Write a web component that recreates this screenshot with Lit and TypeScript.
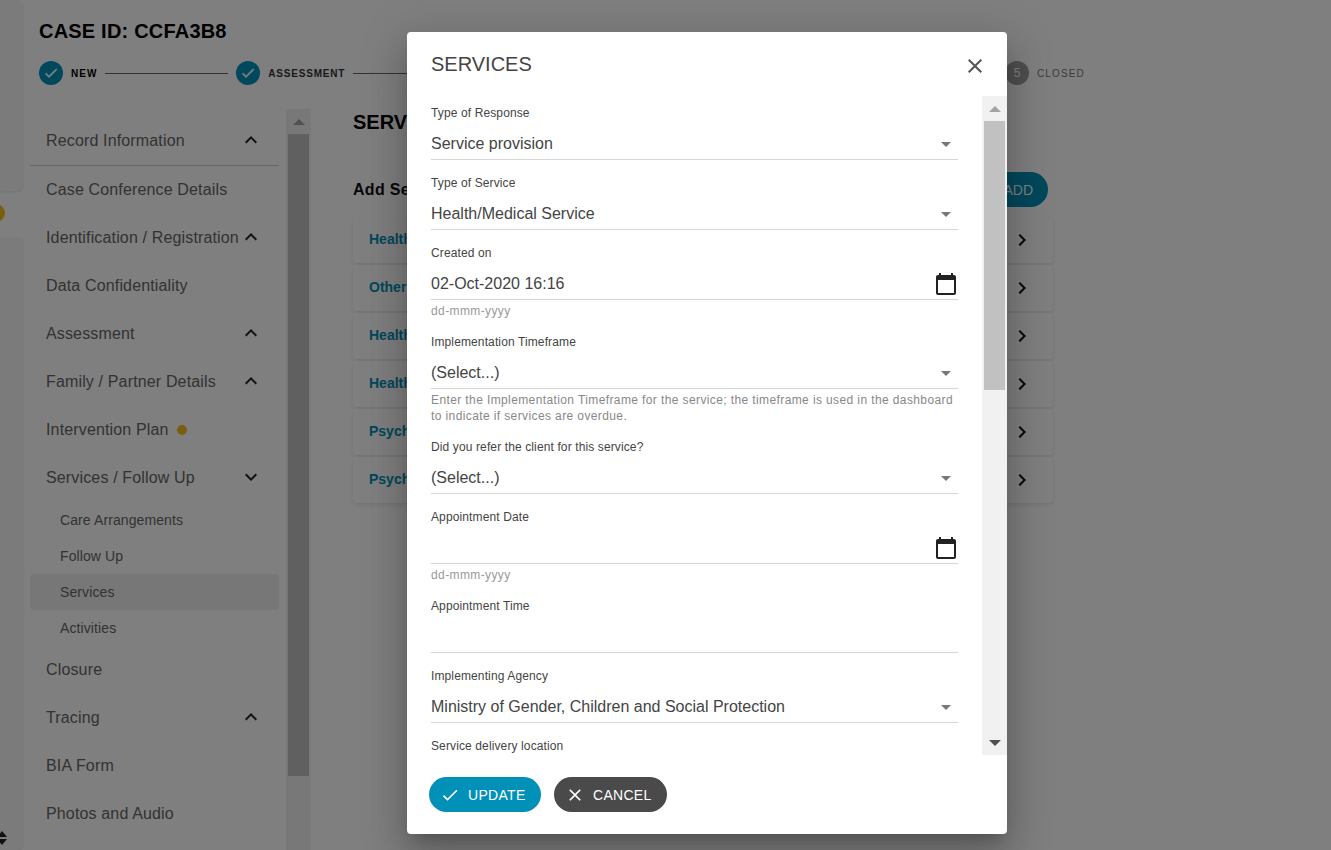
import { LitElement, css, html, svg } from "lit";
import { customElement } from "lit/decorators.js";

const ICONS = {
  check: "M9 16.17L4.83 12l-1.42 1.41L9 19 21 7l-1.41-1.41z",
  close:
    "M19 6.41L17.59 5 12 10.59 6.41 5 5 6.41 10.59 12 5 17.59 6.41 19 12 13.41 17.59 19 19 17.59 13.41 12z",
  up: "M7.41 15.41L12 10.83l4.59 4.58L18 14l-6-6-6 6z",
  down: "M7.41 8.59L12 13.17l4.59-4.58L18 10l-6 6-6-6z",
  right: "M10 6L8.59 7.41 13.17 12l-4.58 4.59L10 18l6-6z",
  calendar:
    "M20 3h-1V1h-2v2H7V1H5v2H4c-1.1 0-2 .9-2 2v16c0 1.1.9 2 2 2h16c1.1 0 2-.9 2-2V5c0-1.1-.9-2-2-2zm0 18H4V8h16v13z",
};

const icon = (name: keyof typeof ICONS, size = 24) => html`<svg
  class="icon"
  width=${size}
  height=${size}
  viewBox="0 0 24 24"
  fill="currentColor"
>
  ${svg`<path d=${ICONS[name]}></path>`}
</svg>`;

type NavItem = {
  label: string;
  chevron?: "up" | "down";
  dot?: boolean;
  divider?: boolean;
  sub?: { label: string; active?: boolean }[];
};

const NAV: NavItem[] = [
  { label: "Record Information", chevron: "up", divider: true },
  { label: "Case Conference Details" },
  { label: "Identification / Registration", chevron: "up" },
  { label: "Data Confidentiality" },
  { label: "Assessment", chevron: "up" },
  { label: "Family / Partner Details", chevron: "up" },
  { label: "Intervention Plan", dot: true },
  {
    label: "Services / Follow Up",
    chevron: "down",
    sub: [
      { label: "Care Arrangements" },
      { label: "Follow Up" },
      { label: "Services", active: true },
      { label: "Activities" },
    ],
  },
  { label: "Closure" },
  { label: "Tracing", chevron: "up" },
  { label: "BIA Form" },
  { label: "Photos and Audio" },
];

const STEPS = ["NEW", "ASSESSMENT", "PLANNING", "IMPLEMENTATION", "CLOSED"];
const SERVICES = [
  "Health/Medical Service",
  "Other Service",
  "Health/Medical Service",
  "Health/Medical Service",
  "Psychosocial Service",
  "Psychosocial Service",
];

type Field = {
  label: string;
  value?: string;
  kind?: "select" | "date" | "text";
  help?: string;
};

const FIELDS: Field[] = [
  { label: "Type of Response", value: "Service provision", kind: "select" },
  { label: "Type of Service", value: "Health/Medical Service", kind: "select" },
  { label: "Created on", value: "02-Oct-2020 16:16", kind: "date", help: "dd-mmm-yyyy" },
  {
    label: "Implementation Timeframe",
    value: "(Select...)",
    kind: "select",
    help: "Enter the Implementation Timeframe for the service; the timeframe is used in the dashboard to indicate if services are overdue.",
  },
  { label: "Did you refer the client for this service?", value: "(Select...)", kind: "select" },
  { label: "Appointment Date", kind: "date", help: "dd-mmm-yyyy" },
  { label: "Appointment Time", kind: "text" },
  {
    label: "Implementing Agency",
    value: "Ministry of Gender, Children and Social Protection",
    kind: "select",
  },
  { label: "Service delivery location", kind: "select" },
];

@customElement("app-root")
export class AppRoot extends LitElement {
  static styles = css`
    :host {
      display: block;
      height: 850px;
      overflow: hidden;
      position: relative;
      font-family: "Liberation Sans", Arial, sans-serif;
      color: #000;
    }
    * {
      box-sizing: border-box;
    }
    .icon {
      display: block;
      flex: none;
    }

    .page {
      display: flex;
      height: 850px;
      background: #fff;
    }
    .rail {
      width: 23px;
      flex: none;
      display: flex;
      flex-direction: column;
      background: #fff;
      position: relative;
    }
    .rail-card {
      width: 23px;
      background: #f6f6f6;
      border-radius: 0 6px 6px 0;
      box-shadow: 0 1px 3px rgba(0, 0, 0, 0.1);
    }
    .rail-card.top {
      height: 191px;
    }
    .rail-card.bottom {
      flex: 1;
      margin-top: 46px;
    }
    .rail-dot {
      position: absolute;
      left: -13px;
      top: 204px;
      width: 18px;
      height: 18px;
      border-radius: 50%;
      background: #f5bd1f;
    }
    .rail-sort {
      position: absolute;
      left: -3px;
      top: 831px;
      display: flex;
      flex-direction: column;
      gap: 2px;
    }
    .rail-sort i {
      display: block;
      width: 0;
      border-left: 5px solid transparent;
      border-right: 5px solid transparent;
    }
    .rail-sort i:first-child {
      border-bottom: 6px solid #222;
    }
    .rail-sort i:last-child {
      border-top: 6px solid #222;
    }

    .panel {
      flex: 1;
      min-width: 0;
      display: flex;
      flex-direction: column;
    }
    .head {
      padding: 19px 0 0 16px;
      width: 1062px;
    }
    .case-id {
      margin: 0;
      font-size: 20px;
      line-height: 24px;
      font-weight: 700;
      letter-spacing: 0.2px;
      color: #000;
    }
    .stepper {
      display: flex;
      align-items: center;
      gap: 8px;
      margin-top: 18px;
      height: 24px;
    }
    .step-circle {
      width: 24px;
      height: 24px;
      flex: none;
      border-radius: 50%;
      background: #0090b8;
      color: #fff;
      display: flex;
      align-items: center;
      justify-content: center;
      font-size: 12px;
    }
    .step-circle .icon path {
      stroke: currentColor;
      stroke-width: 0.8;
    }
    .step-circle.todo {
      background: #9e9e9e;
    }
    .step-label {
      font-size: 10px;
      font-weight: 700;
      letter-spacing: 0.8px;
      color: #333;
    }
    .step-label.first {
      letter-spacing: 1px;
      color: #000;
    }
    .step-label.todo {
      font-weight: 400;
      letter-spacing: 1.15px;
      color: #777;
    }
    .step-line {
      flex: 1;
      height: 1px;
      background: #666;
    }
    .step-line.fixed {
      flex: none;
      width: 123px;
    }

    .body {
      flex: 1;
      min-height: 0;
      display: flex;
      margin-top: 24px;
      margin-left: 7px;
    }
    .nav {
      width: 249px;
      flex: none;
      padding-top: 8px;
      margin-right: 7px;
    }
    .nav-row {
      height: 48px;
      padding: 0 16px;
      display: flex;
      align-items: center;
      justify-content: space-between;
      font-size: 16px;
      letter-spacing: 0.15px;
      color: #666;
    }
    .nav-row.divider {
      height: 49px;
      margin-bottom: -1px;
      padding-bottom: 2px;
      border-bottom: 1px solid #ccc;
    }
    .nav-label {
      display: flex;
      align-items: center;
      gap: 8px;
      padding-top: 1px;
      white-space: nowrap;
    }
    .nav-row .icon {
      color: #222;
    }
    .nav-dot {
      width: 10px;
      height: 10px;
      border-radius: 50%;
      background: #f5bd1f;
    }
    .sub-row {
      height: 36px;
      padding-left: 30px;
      display: flex;
      align-items: center;
      font-size: 14px;
      letter-spacing: 0.1px;
      color: #666;
      border-radius: 4px;
    }
    .sub-row.active {
      background: #efefef;
    }
    .sub-list {
      margin-top: 1px;
      margin-bottom: -1px;
    }

    .scrollbar {
      width: 25px;
      flex: none;
      display: flex;
      flex-direction: column;
      background: #f1f1f1;
      align-items: center;
    }
    .scroll-btn {
      height: 25px;
      flex: none;
      display: flex;
      align-items: center;
      justify-content: center;
      width: 100%;
    }
    .arrow-up,
    .arrow-down {
      width: 0;
      border-left: 6px solid transparent;
      border-right: 6px solid transparent;
    }
    .arrow-up {
      border-bottom: 6px solid #a3a3a3;
    }
    .arrow-down {
      border-top: 6px solid #505050;
    }
    .thumb {
      width: 21px;
      background: #c1c1c1;
    }
    .thumb.page-thumb {
      height: 642px;
    }
    .thumb.modal-thumb {
      height: 269px;
    }
    .spacer {
      flex: 1;
    }

    .content {
      width: 700px;
      flex: none;
      margin-left: 42px;
      position: relative;
    }
    .content h2 {
      margin: 0;
      font-size: 20px;
      line-height: 24px;
      font-weight: 700;
      padding-top: 1px;
      height: 25px;
    }
    .add-row {
      display: flex;
      align-items: center;
      justify-content: space-between;
      margin-top: 38px;
      padding-right: 5px;
      height: 35px;
    }
    .add-row strong {
      font-size: 16px;
      font-weight: 700;
      letter-spacing: 0.3px;
      color: #111;
    }
    .add-btn {
      height: 35px;
      width: 112px;
      border-radius: 18px;
      background: #0090b8;
      color: #fff;
      display: flex;
      align-items: center;
      justify-content: flex-end;
      padding-right: 15px;
      font-size: 14px;
    }
    .cards {
      display: flex;
      flex-direction: column;
      gap: 2px;
      margin-top: 10px;
    }
    .card {
      height: 46px;
      display: flex;
      align-items: center;
      justify-content: space-between;
      padding: 0 19px 0 16px;
      background: #fff;
      border-radius: 4px;
      box-shadow: 0 2px 4px rgba(0, 0, 0, 0.1);
      font-size: 14px;
      font-weight: 700;
      color: #0090b8;
    }
    .card span {
      padding-bottom: 2px;
    }
    .card .icon {
      color: #111;
    }

    .scrim {
      position: absolute;
      inset: 0;
      background: rgba(0, 0, 0, 0.5);
    }
    .modal {
      position: absolute;
      left: 407px;
      top: 32px;
      width: 600px;
      height: 802px;
      background: #fff;
      border-radius: 4px;
      display: flex;
      flex-direction: column;
      box-shadow: 0 11px 15px -7px rgba(0, 0, 0, 0.2),
        0 24px 38px 3px rgba(0, 0, 0, 0.14), 0 9px 46px 8px rgba(0, 0, 0, 0.12);
      overflow: hidden;
    }
    .modal-head {
      height: 64px;
      flex: none;
      padding: 20px 20px 0 24px;
      display: flex;
      justify-content: space-between;
    }
    .modal-head h1 {
      margin: 0;
      font-size: 20px;
      line-height: 24px;
      font-weight: 400;
      color: #444;
    }
    .modal-head .icon {
      color: #555;
      margin-top: 2px;
    }
    .modal-body {
      flex: none;
      height: 659px;
      display: flex;
    }
    .fields {
      flex: 1;
      min-width: 0;
      overflow: hidden;
      padding: 9px 24px 0 24px;
    }
    .field {
      margin-bottom: 15px;
    }
    .field label {
      display: block;
      font-size: 12px;
      line-height: 16px;
      letter-spacing: 0.12px;
      color: #444;
    }
    .control {
      height: 39px;
      display: flex;
      align-items: center;
      justify-content: space-between;
      border-bottom: 1px solid #d6d6d6;
      font-size: 16px;
      color: #444;
      padding-top: 8px;
    }
    .caret {
      width: 0;
      margin-right: 7px;
      border-left: 5px solid transparent;
      border-right: 5px solid transparent;
      border-top: 5px solid #777;
    }
    .control .icon {
      color: #222;
    }
    .help {
      margin-top: 4px;
      font-size: 12px;
      line-height: 15px;
      letter-spacing: 0.39px;
      color: #999;
    }
    .help.long {
      color: #888;
      line-height: 15.5px;
    }
    .modal-actions {
      flex: 1;
      display: flex;
      gap: 13px;
      padding: 22px 0 0 22px;
    }
    .btn {
      height: 35px;
      border: none;
      border-radius: 18px;
      color: #fff;
      display: flex;
      align-items: center;
      gap: 8px;
      padding: 0 0 0 11px;
      font: 400 14px "Liberation Sans", Arial, sans-serif;
      letter-spacing: 0.3px;
    }
    .btn.primary {
      width: 112px;
      background: #0090b8;
    }
    .btn.secondary {
      width: 113px;
      background: #4a4a4a;
    }
  `;

  private renderNav(item: NavItem) {
    return html`
      <div class="nav-row ${item.divider ? "divider" : ""}">
        <span class="nav-label">
          ${item.label}${item.dot ? html`<span class="nav-dot"></span>` : null}
        </span>
        ${item.chevron ? icon(item.chevron) : null}
      </div>
      ${item.sub
        ? html`<div class="sub-list">
            ${item.sub.map(
              (s) =>
                html`<div class="sub-row ${s.active ? "active" : ""}">${s.label}</div>`
            )}
          </div>`
        : null}
    `;
  }

  private renderField(f: Field) {
    return html`<div class="field">
      <label>${f.label}</label>
      <div class="control">
        <span>${f.value ?? ""}</span>
        ${f.kind === "select" ? html`<span class="caret"></span>` : null}
        ${f.kind === "date" ? icon("calendar") : null}
      </div>
      ${f.help
        ? html`<div class="help ${f.help.length > 20 ? "long" : ""}">${f.help}</div>`
        : null}
    </div>`;
  }

  render() {
    return html`
      <div class="page">
        <div class="rail">
          <div class="rail-card top"></div>
          <div class="rail-card bottom"></div>
          <span class="rail-dot"></span>
          <span class="rail-sort"><i></i><i></i></span>
        </div>
        <div class="panel">
          <div class="head">
            <h3 class="case-id">CASE ID: CCFA3B8</h3>
            <div class="stepper">
              ${STEPS.map((step, i) => {
                const done = i < 2;
                return html`
                  <span class="step-circle ${done ? "" : "todo"}">
                    ${done ? icon("check", 16) : i + 1}
                  </span>
                  <span class="step-label ${i === 0 ? "first" : ""} ${done ? "" : "todo"}">
                    ${step}
                  </span>
                  ${i < STEPS.length - 1
                    ? html`<span class="step-line ${i < 2 ? "fixed" : ""}"></span>`
                    : null}
                `;
              })}
            </div>
          </div>
          <div class="body">
            <nav class="nav">${NAV.map((n) => this.renderNav(n))}</nav>
            <div class="scrollbar">
              <div class="scroll-btn"><span class="arrow-up"></span></div>
              <div class="thumb page-thumb"></div>
            </div>
            <section class="content">
              <h2>SERVICES</h2>
              <div class="add-row">
                <strong>Add Services</strong>
                <span class="add-btn">ADD</span>
              </div>
              <div class="cards">
                ${SERVICES.map(
                  (s) => html`<div class="card"><span>${s}</span>${icon("right")}</div>`
                )}
              </div>
            </section>
          </div>
        </div>
      </div>

      <div class="scrim"></div>

      <div class="modal" role="dialog">
        <div class="modal-head">
          <h1>SERVICES</h1>
          ${icon("close")}
        </div>
        <div class="modal-body">
          <div class="fields">${FIELDS.map((f) => this.renderField(f))}</div>
          <div class="scrollbar">
            <div class="scroll-btn"><span class="arrow-up"></span></div>
            <div class="thumb modal-thumb"></div>
            <div class="spacer"></div>
            <div class="scroll-btn"><span class="arrow-down"></span></div>
          </div>
        </div>
        <div class="modal-actions">
          <button class="btn primary">${icon("check", 20)}UPDATE</button>
          <button class="btn secondary">${icon("close", 20)}CANCEL</button>
        </div>
      </div>
    `;
  }
}
